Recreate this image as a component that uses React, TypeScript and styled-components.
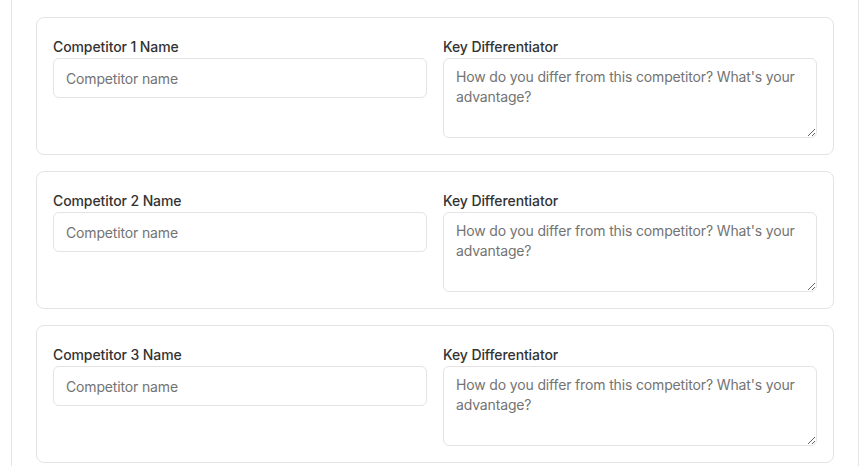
import React from "react";
import styled, { createGlobalStyle } from "styled-components";

const Global = createGlobalStyle`
  html, body { margin: 0; padding: 0; background: #ffffff; }
  body { font-family: Inter, "Noto Sans", Arial, sans-serif; -webkit-font-smoothing: antialiased; }
  * { box-sizing: border-box; }
`;

const Page = styled.div`
  padding-left: 11px;
  height: 466px;
  overflow: hidden;
`;

const Panel = styled.div`
  width: 848px;
  border-left: 1px solid #e5e5e5;
  border-right: 1px solid #e5e5e5;
  padding: 17px 24px 24px;
  display: flex;
  flex-direction: column;
  gap: 16px;
`;

const Card = styled.div`
  border: 1px solid #e3e3e3;
  border-radius: 8px;
  padding: 16px;
  display: grid;
  grid-template-columns: 1fr 1fr;
  gap: 16px;
`;

const Field = styled.div`
  display: flex;
  flex-direction: column;
`;

const Label = styled.label`
  padding-top: 2px;
  font-size: 14px;
  line-height: 22px;
  font-weight: 500;
  letter-spacing: -0.1px;
  color: #333333;
`;

const inputBase = `
  width: 100%;
  border: 1px solid #e3e3e3;
  border-radius: 6px;
  padding: 8px 12px;
  font-family: Inter, "Noto Sans", Arial, sans-serif;
  font-size: 14px;
  line-height: 20px;
  letter-spacing: -0.15px;
  color: #262626;
  background: #ffffff;
  outline: none;
  &::placeholder { color: #737373; }
`;

const Input = styled.input`
  ${inputBase}
  height: 40px;
`;

const TextArea = styled.textarea`
  ${inputBase}
  height: 80px;
  resize: vertical;
  display: block;
`;

export default function App() {
  return (
    <>
      <Global />
      <Page>
        <Panel>
          {[1, 2, 3].map((n) => (
            <Card key={n}>
              <Field>
                <Label>Competitor {n} Name</Label>
                <Input placeholder="Competitor name" />
              </Field>
              <Field>
                <Label>Key Differentiator</Label>
                <TextArea placeholder="How do you differ from this competitor? What's your advantage?" />
              </Field>
            </Card>
          ))}
        </Panel>
      </Page>
    </>
  );
}
